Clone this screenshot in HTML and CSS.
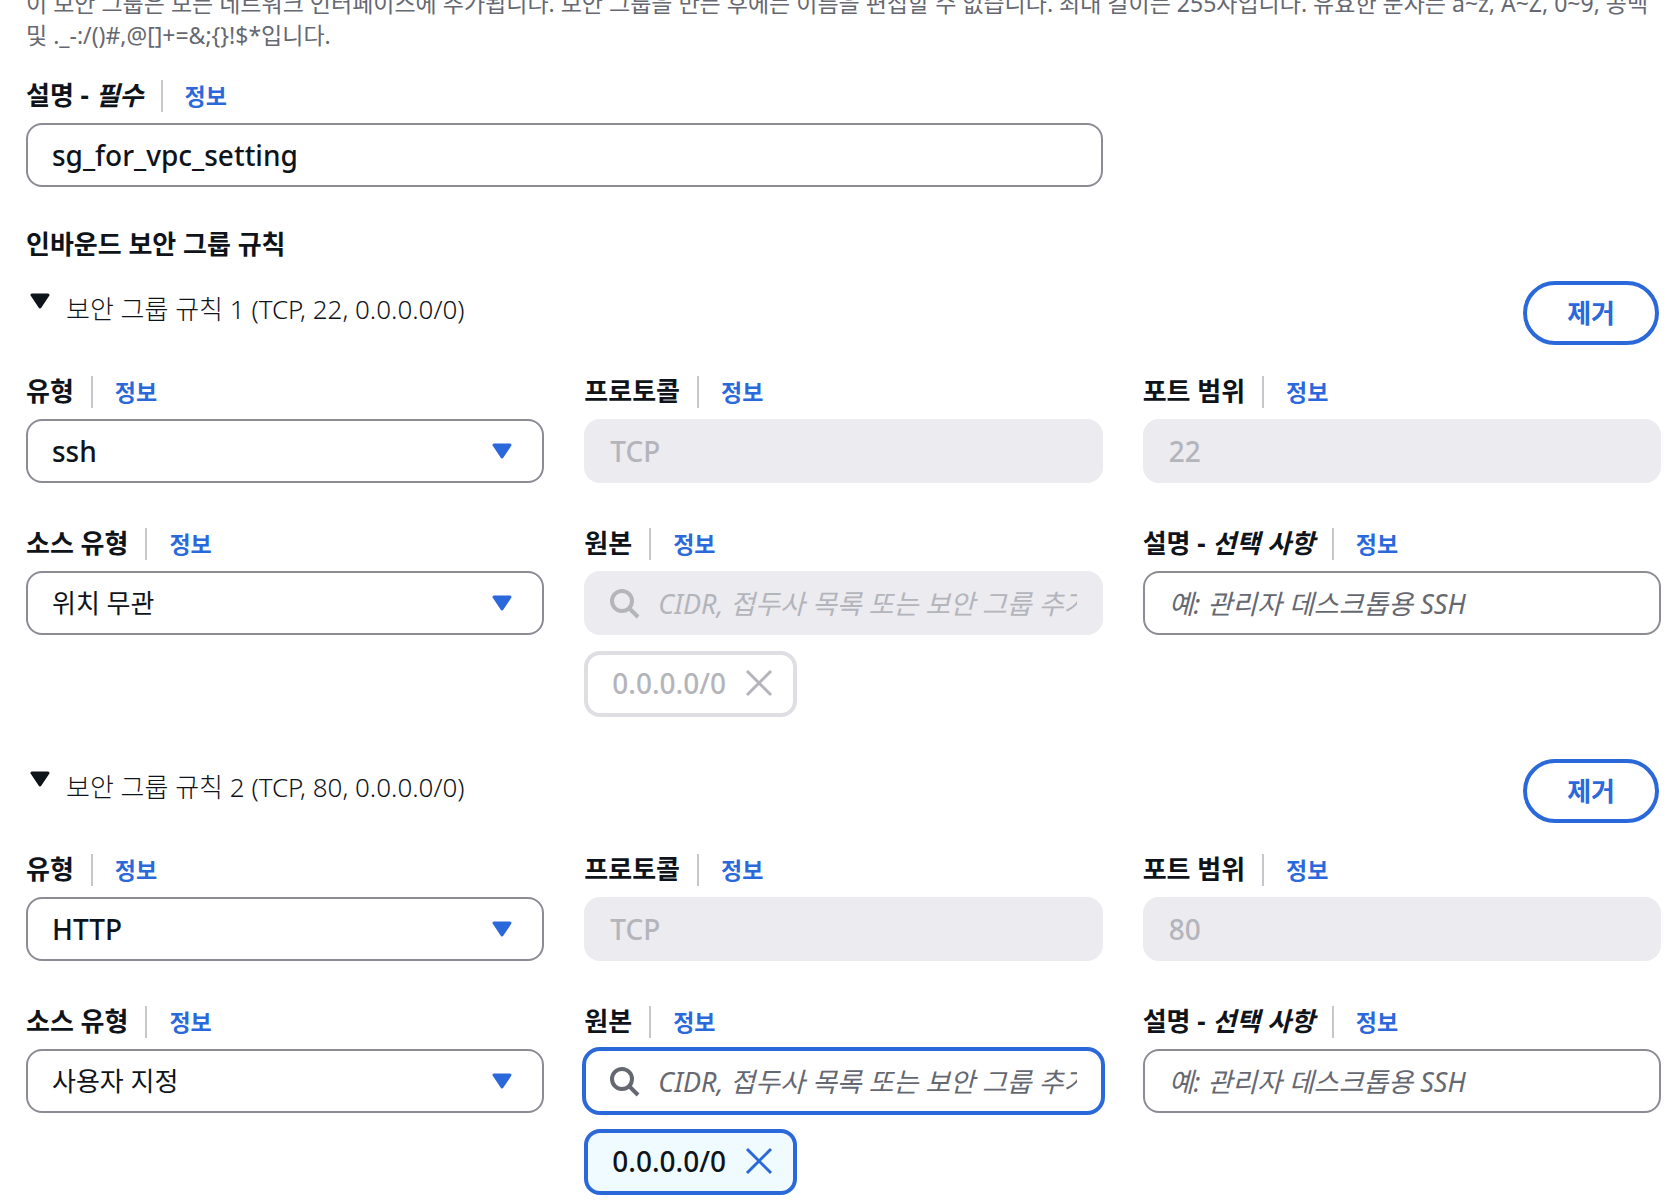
FILE: index.html
```html
<!DOCTYPE html>
<html lang="ko">
<head>
    <meta charset="UTF-8">
    <meta name="viewport" content="width=device-width, initial-scale=1.0">
    <title>보안 그룹 규칙</title>
    <link rel="stylesheet" href="styles.css">
</head>
<body>

    <form class="form">
        <p class="help">이 보안 그룹은 모든 네트워크 인터페이스에 추가됩니다. 보안 그룹을 만든 후에는 이름을 편집할 수 없습니다. 최대 길이는 255자입니다. 유효한 문자는 a~z, A~Z, 0~9, 공백<br>및 ._-:/()#,@[]+=&amp;;{}!$*입니다.</p>

        <div class="grid">
            <div class="field wide">
                <div class="label-row">
                    <label for="groupDescription">설명 - <em>필수</em></label>
                    <a class="info" href="#">정보</a>
                </div>
                <input class="control" type="text" id="groupDescription" value="sg_for_vpc_setting">
            </div>
        </div>

        <h2>인바운드 보안 그룹 규칙</h2>

        <section class="rule">
            <div class="rule-header">
                <button class="toggle" type="button" aria-expanded="true">
                    <svg class="caret" viewBox="0 0 20 16"><path d="M2 2h16l-8 12z"/></svg>
                    <span>보안 그룹 규칙 1 (TCP, 22, 0.0.0.0/0)</span>
                </button>
                <button class="remove" type="button">제거</button>
            </div>
            <div class="grid">
                <div class="field">
                    <div class="label-row">
                        <label for="type1">유형</label>
                        <a class="info" href="#">정보</a>
                    </div>
                    <div class="select">
                        <select class="control" id="type1"><option>ssh</option></select>
                        <svg class="caret" viewBox="0 0 20 16"><path d="M2 2h16l-8 12z"/></svg>
                    </div>
                </div>
                <div class="field">
                    <div class="label-row">
                        <label for="protocol1">프로토콜</label>
                        <a class="info" href="#">정보</a>
                    </div>
                    <input class="control" type="text" id="protocol1" value="TCP" disabled>
                </div>
                <div class="field">
                    <div class="label-row">
                        <label for="port1">포트 범위</label>
                        <a class="info" href="#">정보</a>
                    </div>
                    <input class="control" type="text" id="port1" value="22" disabled>
                </div>
                <div class="field">
                    <div class="label-row">
                        <label for="sourceType1">소스 유형</label>
                        <a class="info" href="#">정보</a>
                    </div>
                    <div class="select">
                        <select class="control ko" id="sourceType1"><option>위치 무관</option></select>
                        <svg class="caret" viewBox="0 0 20 16"><path d="M2 2h16l-8 12z"/></svg>
                    </div>
                </div>
                <div class="field">
                    <div class="label-row">
                        <label for="source1">원본</label>
                        <a class="info" href="#">정보</a>
                    </div>
                    <div class="search disabled">
                        <svg viewBox="0 0 32 32"><circle cx="14" cy="14" r="10"/><path d="M21 21l9 9"/></svg>
                        <input type="text" id="source1" placeholder="CIDR, 접두사 목록 또는 보안 그룹 추가" disabled>
                    </div>
                    <div class="token disabled">
                        <span>0.0.0.0/0</span>
                        <button type="button" aria-label="제거" disabled>
                            <svg viewBox="0 0 28 28"><path d="M2 2l24 24M26 2L2 26"/></svg>
                        </button>
                    </div>
                </div>
                <div class="field">
                    <div class="label-row">
                        <label for="ruleDescription1">설명 - <em>선택 사항</em></label>
                        <a class="info" href="#">정보</a>
                    </div>
                    <input class="control" type="text" id="ruleDescription1" placeholder="예: 관리자 데스크톱용 SSH">
                </div>
            </div>
        </section>

        <section class="rule">
            <div class="rule-header">
                <button class="toggle" type="button" aria-expanded="true">
                    <svg class="caret" viewBox="0 0 20 16"><path d="M2 2h16l-8 12z"/></svg>
                    <span>보안 그룹 규칙 2 (TCP, 80, 0.0.0.0/0)</span>
                </button>
                <button class="remove" type="button">제거</button>
            </div>
            <div class="grid">
                <div class="field">
                    <div class="label-row">
                        <label for="type2">유형</label>
                        <a class="info" href="#">정보</a>
                    </div>
                    <div class="select">
                        <select class="control" id="type2"><option>HTTP</option></select>
                        <svg class="caret" viewBox="0 0 20 16"><path d="M2 2h16l-8 12z"/></svg>
                    </div>
                </div>
                <div class="field">
                    <div class="label-row">
                        <label for="protocol2">프로토콜</label>
                        <a class="info" href="#">정보</a>
                    </div>
                    <input class="control" type="text" id="protocol2" value="TCP" disabled>
                </div>
                <div class="field">
                    <div class="label-row">
                        <label for="port2">포트 범위</label>
                        <a class="info" href="#">정보</a>
                    </div>
                    <input class="control" type="text" id="port2" value="80" disabled>
                </div>
                <div class="field">
                    <div class="label-row">
                        <label for="sourceType2">소스 유형</label>
                        <a class="info" href="#">정보</a>
                    </div>
                    <div class="select">
                        <select class="control ko" id="sourceType2"><option>사용자 지정</option></select>
                        <svg class="caret" viewBox="0 0 20 16"><path d="M2 2h16l-8 12z"/></svg>
                    </div>
                </div>
                <div class="field">
                    <div class="label-row">
                        <label for="source2">원본</label>
                        <a class="info" href="#">정보</a>
                    </div>
                    <div class="search active">
                        <svg viewBox="0 0 32 32"><circle cx="14" cy="14" r="10"/><path d="M21 21l9 9"/></svg>
                        <input type="text" id="source2" placeholder="CIDR, 접두사 목록 또는 보안 그룹 추가">
                    </div>
                    <div class="token">
                        <span>0.0.0.0/0</span>
                        <button type="button" aria-label="제거">
                            <svg viewBox="0 0 28 28"><path d="M2 2l24 24M26 2L2 26"/></svg>
                        </button>
                    </div>
                </div>
                <div class="field">
                    <div class="label-row">
                        <label for="ruleDescription2">설명 - <em>선택 사항</em></label>
                        <a class="info" href="#">정보</a>
                    </div>
                    <input class="control" type="text" id="ruleDescription2" placeholder="예: 관리자 데스크톱용 SSH">
                </div>
            </div>
        </section>
    </form>

</body>
</html>
```

FILE: styles.css
```css
* {
    box-sizing: border-box;
}
body {
    margin: 0;
    background: #fff;
    color: #0f141a;
    font-family: "Noto Sans", "Noto Sans CJK KR", sans-serif;
    font-size: 28px;
    overflow-x: hidden;
}
input, select, button {
    font: inherit;
    color: inherit;
}
.form {
    padding: 0 15px 4px 26px;
}
/* the first help line runs under the top edge of the scrolled panel */
.help {
    margin: -13px 0 29px;
    color: #656871;
    font-size: 23px;
    line-height: 32px;
    white-space: nowrap;
}
.grid {
    display: grid;
    grid-template-columns: repeat(3, minmax(0, 1fr));
    gap: 45px 40px;
}
.wide {
    grid-column: span 2;
}
.label-row {
    display: flex;
    align-items: center;
    height: 32px;
    margin-bottom: 11px;
}
.label-row label {
    padding-bottom: 2px;
    font-size: 26px;
    font-weight: 700;
    line-height: 32px;
}
.info {
    margin-left: 17px;
    padding-left: 22px;
    border-left: 2px solid #c6c6cd;
    color: #2b69db;
    font-size: 23px;
    font-weight: 700;
    line-height: 32px;
    text-decoration: none;
}
.control {
    display: block;
    width: 100%;
    height: 64px;
    padding: 0 24px;
    border: 2px solid #8c8c94;
    border-radius: 16px;
    background: #fff;
    font-weight: 500;
    outline: none;
}
.control.ko {
    font-size: 26px;
    font-weight: 400;
}
.control:disabled {
    border-color: #ebebf0;
    background: #ebebf0;
    color: #b4b4bb;
}
::placeholder {
    color: #656871;
    font-size: 27px;
    font-style: italic;
    font-weight: 400;
    opacity: 1;
}
.select {
    position: relative;
}
.select select {
    appearance: none;
}
.caret {
    width: 20px;
    height: 16px;
    fill: currentColor;
    stroke: currentColor;
    stroke-width: 3;
    stroke-linejoin: round;
}
.select .caret {
    position: absolute;
    top: 24px;
    right: 32px;
    color: #2b69db;
    pointer-events: none;
}
.search {
    display: flex;
    align-items: center;
    height: 64px;
    padding: 0 26px 0 24px;
    border-radius: 16px;
    background: #fff;
    color: #656871;
}
.search svg {
    flex: none;
    width: 32px;
    height: 32px;
    fill: none;
    stroke: currentColor;
    stroke-width: 4;
}
.search input {
    flex: 1;
    min-width: 0;
    margin-left: 18px;
    padding: 0;
    border: 0;
    background: none;
    outline: none;
}
.search.disabled {
    background: #ebebf0;
    color: #b4b4bb;
}
.search.disabled ::placeholder {
    color: #b4b4bb;
}
.search.active {
    outline: 4px solid #2b69db;
    outline-offset: -2px;
}
.token {
    display: inline-flex;
    align-items: center;
    gap: 19px;
    height: 66px;
    margin-top: 16px;
    padding: 0 20px 2px 24px;
    border: 4px solid #2b69db;
    border-radius: 16px;
    background: #f0fbff;
    font-weight: 500;
    vertical-align: top;
}
.token button {
    display: flex;
    padding: 0;
    border: 0;
    background: none;
    color: #2b69db;
    cursor: pointer;
}
.token svg {
    width: 28px;
    height: 28px;
    fill: none;
    stroke: currentColor;
    stroke-width: 3;
}
.token.disabled {
    border-color: #dedee3;
    background: #fff;
    color: #b4b4bb;
}
.token.disabled button {
    color: #b4b4bb;
}
h2 {
    margin: 40px 0 20px;
    font-size: 26px;
    font-weight: 700;
    line-height: 34px;
}
.rule + .rule {
    margin-top: 42px;
}
.rule-header {
    display: flex;
    justify-content: space-between;
    align-items: flex-start;
    margin-bottom: 31px;
    padding-right: 2px;
}
.toggle {
    display: flex;
    gap: 16px;
    padding: 8px 0 0 4px;
    border: 0;
    background: none;
    font-size: 26px;
    font-weight: 300;
    line-height: 40px;
}
.toggle .caret {
    margin-top: 4px;
}
.remove {
    height: 64px;
    padding: 0 40px 2px;
    border: 4px solid #2b69db;
    border-radius: 32px;
    background: #fff;
    color: #2b69db;
    font-size: 26px;
    font-weight: 700;
    cursor: pointer;
}
```
